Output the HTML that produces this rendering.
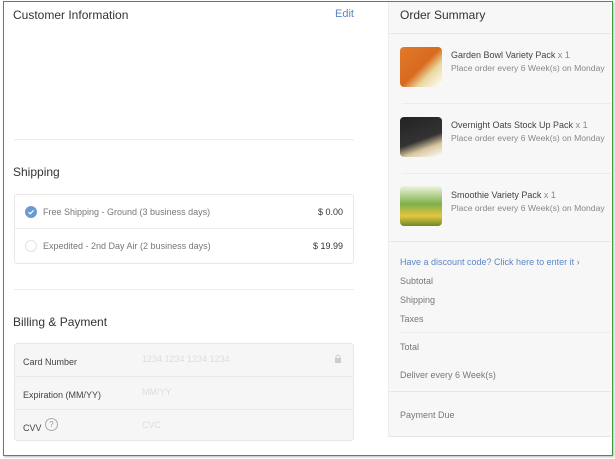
<!DOCTYPE html>
<html><head><meta charset="utf-8"><style>
*{margin:0;padding:0;box-sizing:border-box}
body{width:615px;height:459px;background:#fff;font-family:"Liberation Sans",sans-serif;position:relative;overflow:hidden;color:#333}
.frame{position:absolute;left:3px;top:1px;width:610px;height:455px;border:1px solid #3c9a3c;box-shadow:1px 1px 2px #bbb;z-index:5}
.a{position:absolute;white-space:nowrap}
.h{font-size:12px;color:#333}
.sep{position:absolute;height:1px;background:#ececec}
.panel{position:absolute;left:388px;top:2px;width:223px;height:435px;background:#f7f7f7;border-left:1px solid #eee;border-bottom:1px solid #e6e6e6}
.img{position:absolute;width:42px;height:40px;border-radius:4px;background:#fff}
.t1{font-size:9px;color:#444}
.t1 span{color:#888}
.t2{font-size:8.6px;color:#888}
.s{font-size:9px;color:#777}
.box{position:absolute;left:14px;width:340px;border:1px solid #e8e8e8;border-radius:3px}
.lbl{font-size:9px;color:#444}
.ph{font-size:9px;color:#ddd}
</style></head><body>
<div class="a h" style="left:13px;top:8px">Customer Information</div>
<div class="a" style="left:335px;top:8px;font-size:11px;color:#5b86c2">Edit</div>
<div class="sep" style="left:14px;top:139px;width:340px"></div>
<div class="a h" style="left:13px;top:165px">Shipping</div>
<div class="box" style="top:194px;height:70px"></div>
<div class="sep" style="left:15px;top:228px;width:338px"></div>
<div class="a" style="left:25px;top:206px;width:12px;height:12px;border-radius:50%;background:#6b9ad3"></div>
<svg class="a" style="left:27px;top:208px" width="8" height="8" viewBox="0 0 8 8"><path d="M1.5 4.2L3.3 5.8L6.5 2.4" stroke="#fff" stroke-width="1.2" fill="none"/></svg>
<div class="a s" style="left:43px;top:207px">Free Shipping - Ground (3 business days)</div>
<div class="a" style="left:318px;top:207px;font-size:9px;color:#333">$ 0.00</div>
<div class="a" style="left:25px;top:240px;width:12px;height:12px;border-radius:50%;border:1px solid #e2e2e2"></div>
<div class="a s" style="left:43px;top:241px">Expedited - 2nd Day Air (2 business days)</div>
<div class="a" style="left:313px;top:241px;font-size:9px;color:#333">$ 19.99</div>
<div class="sep" style="left:14px;top:289px;width:340px"></div>
<div class="a h" style="left:13px;top:315px">Billing &amp; Payment</div>
<div class="box" style="top:343px;height:98px;background:#f6f6f6"></div>
<div class="sep" style="left:15px;top:376px;width:338px;background:#e8e8e8"></div>
<div class="sep" style="left:15px;top:409px;width:338px;background:#e8e8e8"></div>
<div class="a lbl" style="left:23px;top:357px">Card Number</div>
<div class="a ph" style="left:142px;top:354px">1234 1234 1234 1234</div>
<svg class="a" style="left:334px;top:354px" width="8" height="10" viewBox="0 0 8 10"><rect x="1" y="4" width="6" height="5" fill="#ccc"/><path d="M2 4V3a2 2 0 0 1 4 0v1" stroke="#ccc" fill="none"/></svg>
<div class="a lbl" style="left:23px;top:390px">Expiration (MM/YY)</div>
<div class="a ph" style="left:142px;top:387px">MM/YY</div>
<div class="a lbl" style="left:23px;top:423px">CVV</div>
<div class="a" style="left:45px;top:418px;width:13px;height:13px;border-radius:50%;border:1px solid #aaa;font-size:8px;color:#999;text-align:center;line-height:11px">?</div>
<div class="a ph" style="left:142px;top:420px">CVC</div>

<div class="panel"></div>
<div class="a h" style="left:400px;top:8px">Order Summary</div>
<div class="sep" style="left:389px;top:33px;width:222px;background:#e8e8e8"></div>
<div class="img" style="left:400px;top:47px;background:linear-gradient(135deg,#e07a2a 0%,#d86a1e 50%,#e9d9a0 70%,#fff 100%)"></div>
<div class="a t1" style="left:451px;top:50px">Garden Bowl Variety Pack <span>x 1</span></div>
<div class="a t2" style="left:451px;top:63px">Place order every 6 Week(s) on Monday</div>
<div class="sep" style="left:402px;top:103px;width:209px"></div>
<div class="img" style="left:400px;top:117px;background:linear-gradient(160deg,#222 0%,#333 55%,#d9c7a0 75%,#fff 100%)"></div>
<div class="a t1" style="left:451px;top:120px">Overnight Oats Stock Up Pack <span>x 1</span></div>
<div class="a t2" style="left:451px;top:133px">Place order every 6 Week(s) on Monday</div>
<div class="sep" style="left:402px;top:173px;width:209px"></div>
<div class="img" style="left:400px;top:186px;background:linear-gradient(180deg,#eef3e0 0%,#7fb04a 45%,#e4c640 75%,#6a8a2a 100%)"></div>
<div class="a t1" style="left:451px;top:190px">Smoothie Variety Pack <span>x 1</span></div>
<div class="a t2" style="left:451px;top:203px">Place order every 6 Week(s) on Monday</div>
<div class="sep" style="left:389px;top:241px;width:222px;background:#e6e6e6"></div>
<div class="a" style="left:400px;top:257px;font-size:9px;color:#5b86c2">Have a discount code? Click here to enter it &#x203A;</div>
<div class="a s" style="left:400px;top:276px">Subtotal</div>
<div class="a s" style="left:400px;top:295px">Shipping</div>
<div class="a s" style="left:400px;top:314px">Taxes</div>
<div class="sep" style="left:400px;top:332px;width:211px"></div>
<div class="a s" style="left:400px;top:342px">Total</div>
<div class="a s" style="left:400px;top:370px">Deliver every 6 Week(s)</div>
<div class="sep" style="left:389px;top:391px;width:222px;background:#e6e6e6"></div>
<div class="a s" style="left:400px;top:410px">Payment Due</div>
<div class="frame"></div>
</body></html>
